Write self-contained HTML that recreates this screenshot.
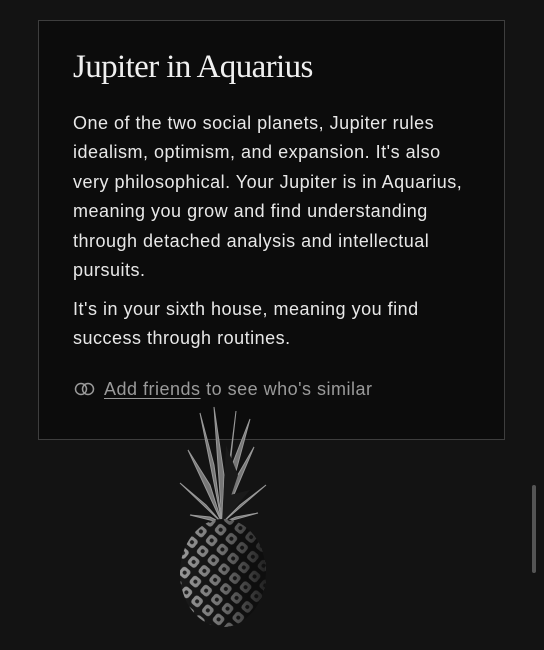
<!DOCTYPE html>
<html><head><style>
html,body{margin:0;padding:0;width:544px;height:650px;background:#131313;overflow:hidden;position:relative;font-family:"Liberation Sans",sans-serif}
.card{position:absolute;left:38px;top:20px;width:467px;height:420px;background:#0c0c0c;border:1px solid #3e3e3e;box-sizing:border-box}
h1{position:absolute;left:34px;top:28px;margin:0;font-family:"Liberation Serif",serif;font-weight:normal;font-size:33px;color:#f0f0f0;letter-spacing:-0.6px}
.p{position:absolute;left:34px;color:#e8e8e8;font-size:18px;letter-spacing:0.5px;line-height:29.4px;width:400px}
.f{position:absolute;left:34px;top:358px;color:#9a9a9a;font-size:18px;letter-spacing:0.5px}
.f u{text-underline-offset:3px}
.sb{position:absolute;left:532px;top:485px;width:4px;height:88px;background:#555;border-radius:2px}
</style></head><body>
<div class="card">
<h1>Jupiter in Aquarius</h1>
<div class="p" style="top:88px">One of the two social planets, Jupiter rules<br>idealism, optimism, and expansion. It's also<br>very philosophical. Your Jupiter is in Aquarius,<br>meaning you grow and find understanding<br>through detached analysis and intellectual<br>pursuits.</div>
<div class="p" style="top:274px">It's in your sixth house, meaning you find<br>success through routines.</div>
<div class="f"><svg width="24" height="14" viewBox="0 0 24 14" style="vertical-align:-1px;margin-right:7px"><circle cx="8" cy="7" r="5.5" fill="none" stroke="#9a9a9a" stroke-width="1.5"/><circle cx="15" cy="7" r="5.5" fill="none" stroke="#9a9a9a" stroke-width="1.5"/></svg><u>Add friends</u> to see who's similar</div>
</div>
<svg style="position:absolute;left:170px;top:405px" width="110" height="230" viewBox="0 0 110 230">
<defs><pattern id="pp" width="14" height="14" patternUnits="userSpaceOnUse" patternTransform="rotate(40)"><rect width="14" height="14" fill="#1a1a1a"/><rect x="2" y="2" width="10" height="10" rx="3" fill="#999"/><circle cx="7" cy="7" r="2" fill="#222"/></pattern>
<linearGradient id="sh" x1="0" x2="1"><stop offset="0" stop-color="#000" stop-opacity="0"/><stop offset="0.45" stop-color="#000" stop-opacity="0.25"/><stop offset="1" stop-color="#0c0c0c" stop-opacity="0.85"/></linearGradient></defs>
<g fill="#777" stroke="#999" stroke-width="1">
<path d="M52 118 L30 8 L44 60 Z"/><path d="M52 118 L66 6 L60 60 Z"/><path d="M52 118 L84 42 L62 80 Z"/><path d="M52 118 L18 45 L40 80 Z"/><path d="M52 118 L10 78 L36 100 Z"/><path d="M52 118 L96 80 L70 100 Z"/><path d="M52 118 L44 2 L54 70 Z"/><path d="M52 118 L80 14 L62 60 Z"/><path d="M52 118 L20 110 L40 112 Z"/><path d="M52 118 L88 108 L66 112 Z"/>
</g>
<g fill="#1a1a1a"><path d="M52 118 L56 40 L68 70 Z"/><path d="M52 118 L60 90 L80 85 Z"/></g>
<ellipse cx="53" cy="168" rx="43" ry="54" fill="url(#pp)"/>
<ellipse cx="53" cy="168" rx="43" ry="54" fill="url(#sh)"/>
</svg>
<div class="sb"></div>
</body></html>
